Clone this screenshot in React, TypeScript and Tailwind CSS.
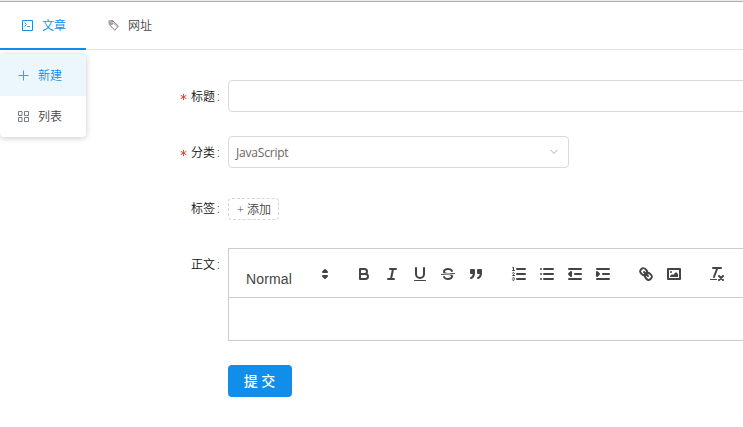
import type { ReactNode } from 'react';

function Tool({ children }: { children: ReactNode }) {
  return (
    <button className="flex h-6 w-7 items-center justify-center">
      <svg viewBox="0 0 18 18" className="h-[18px] w-[18px]" fill="none" stroke="#444" strokeWidth="2" strokeLinecap="round" strokeLinejoin="round">
        {children}
      </svg>
    </button>
  );
}

function Label({ text, required }: { text: string; required?: boolean }) {
  return (
    <div className="flex h-8 w-[228px] shrink-0 items-center justify-end pr-[6px] pt-[2px] text-[#111]">
      {required && (
        <svg viewBox="0 0 8 8" className="mr-[4px] h-[8px] w-[7px]" stroke="#e8402f" strokeWidth="1.1">
          <path d="M4 .5v7M.8 2l6.4 4M7.2 2L.8 6" />
        </svg>
      )}
      <span>{text}</span>
      <span className="ml-[2px] w-[5px] text-[12px]">:</span>
    </div>
  );
}

export default function App() {
  return (
    <div className="h-[427px] w-[743px] overflow-hidden bg-white font-['Open_Sans','Noto_Sans_CJK_SC',sans-serif] text-[12px] font-[350] leading-[18px] text-[#444]">
      <div className="h-[2px] border-b border-[#adadad] bg-[#ececec]" />
      <nav className="relative flex h-12 border-b border-[#e4e4e4]">
        <div className="-mb-px flex w-[86px] items-center border-b-2 border-[#108ee9] pl-[22px] pt-[2px] text-[#108ee9]">
          <svg viewBox="0 0 11 11" className="-mt-px h-[11px] w-[11px]" fill="none" stroke="currentColor">
            <path d="M.5.5h10v10H.5z" />
            <path d="M2.5 2.5l2 2-2 2M5 6.5h3" strokeWidth=".8" />
          </svg>
          <span className="ml-[9px]">文章</span>
        </div>
        <div className="flex items-center pb-px pl-[22px] pt-[2px]">
          <svg viewBox="0 0 12 12" className="-mt-px h-[11px] w-[11px]" fill="none" stroke="#75675f" strokeWidth=".9">
            <path d="M1 1l4-.3 6.2 5.8L7.4 11.2 1.5 5z" />
            <path d="M5 .7L2.8 2.2l-.5 3.6M5 .7l-.2 1.6 5.6 5.2" strokeWidth=".7" />
            <circle cx="4.2" cy="4" r=".9" />
          </svg>
          <span className="ml-[9px]">网址</span>
        </div>
        <div className="absolute left-0 top-[52px] h-[83px] w-[86px] overflow-visible rounded-[4px] bg-white shadow-[0_1px_6px_rgba(0,0,0,0.22)]">
          <div className="flex h-[42px] items-center rounded-t-[4px] bg-[#ebf6fd] pl-[18px] pt-[2px] text-[#108ee9]">
            <svg viewBox="0 0 11 11" className="-mt-[2px] h-[11px] w-[11px]" stroke="#5f8fd6">
              <path d="M5.5.5v10M.5 5.5h10" />
            </svg>
            <span className="ml-[9px]">新建</span>
          </div>
          <div className="flex h-[41px] items-center pl-[18px]">
            <svg viewBox="0 0 11 11" className="-mt-px h-[11px] w-[11px]" fill="none" stroke="#65707a" strokeWidth=".9">
              <path d="M.5.5h3.5v4H.5zM6.5.5h4v4h-4zM.5 6.5h3.5v4H.5zM6.5 6.5h4v4h-4z" />
            </svg>
            <span className="ml-[9px]">列表</span>
          </div>
        </div>
      </nav>

      <form className="flex w-[760px] flex-col pt-[30px]">
        <div className="flex h-14">
          <Label text="标题" required />
          <div className="h-8 flex-1 rounded-[4px] border border-[#d9d9d9]" />
        </div>
        <div className="flex h-14">
          <Label text="分类" required />
          <div className="flex h-8 w-[341px] items-center justify-between rounded-[4px] border border-[#d9d9d9] pl-[7px] pr-[10px]">
            <span className="pt-[2px] font-normal tracking-[-0.2px] text-[#6b6460]">JavaScript</span>
            <svg viewBox="0 0 8 6" className="h-[6px] w-[8px]" fill="none" stroke="#b0b0b0">
              <path d="M.8 1L4 4.5 7.2 1" />
            </svg>
          </div>
        </div>
        <div className="flex h-14">
          <Label text="标签" />
          <div className="mt-[6px] flex h-[22px] w-[51px] items-center justify-center rounded-[4px] border border-dashed border-[#d5d5d5] pl-px pt-[2px]">
            + 添加
          </div>
        </div>
        <div className="flex h-[93px]">
          <Label text="正文" />
          <div className="flex-1 border border-[#ccc]">
            <div className="flex h-[49px] items-center gap-[15px] border-b border-[#ccc] pl-2 pt-px font-['Liberation_Sans',Arial,sans-serif] font-normal text-[#444]">
              <div className="flex w-[98px] items-center justify-between pl-[9px]">
                <span className="mt-[10px] text-[14px] leading-6 tracking-[0.15px]">Normal</span>
                <svg viewBox="0 0 18 18" className="mr-[1px] h-[18px] w-[18px]" fill="#444" stroke="#444" strokeWidth="2" strokeLinecap="round" strokeLinejoin="round">
                  <polygon points="7 11 9 13 11 11" />
                  <polygon points="7 7 9 5 11 7" />
                </svg>
              </div>
              <div className="flex">
                <Tool>
                  <path d="M5 4h4.5a2.5 2.5 0 0 1 0 5H5z" />
                  <path d="M5 9h5.5a2.5 2.5 0 0 1 0 5H5z" />
                </Tool>
                <Tool>
                  <path d="M7 4h6M5 14h6M8 14l2-10" />
                </Tool>
                <Tool>
                  <path d="M5 3v6a4 4 0 0 0 8 0V3" />
                  <rect x="3" y="15" width="12" height="1" rx=".5" fill="#444" stroke="none" />
                </Tool>
                <Tool>
                  <path d="M15.5 8.5l-13 1" strokeWidth="1" />
                  <g fill="#444" stroke="none">
                    <path d="M9.007,8C6.542,7.791,6,7.519,6,6.5,6,5.792,7.283,5,9,5c1.571,0,2.765.679,2.969,1.309a1,1,0,0,0,1.9-.617C13.356,4.106,11.354,3,9,3,6.2,3,4,4.538,4,6.5a3.2,3.2,0,0,0,.5,1.843Z" />
                    <path d="M8.984,10C11.457,10.208,12,10.479,12,11.5c0,.708-1.283,1.5-3,1.5-1.571,0-2.765-.679-2.969-1.309a1,1,0,1,0-1.9.617C4.644,13.894,6.646,15,9,15c2.8,0,5-1.538,5-3.5a3.2,3.2,0,0,0-.5-1.843Z" />
                  </g>
                </Tool>
                <Tool>
                  <g fill="#444">
                    <rect x="4" y="5" width="3" height="3" />
                    <rect x="11" y="5" width="3" height="3" />
                    <path d="M7 8c0 4.031-3 5-3 5M14 8c0 4.031-3 5-3 5" />
                  </g>
                </Tool>
              </div>
              <div className="flex">
                <Tool>
                  <path d="M7 4h8M7 9h8M7 14h8" />
                  <g strokeWidth="1">
                    <path d="M2.5 5.5h2" />
                    <path d="M4.5 10.5h-2c0-.234 1.85-1.076 1.85-2.234A.959.959 0 0 0 2.5 8.156" />
                    <path d="M2.5 14.846a.959.959 0 0 0 1.85-.109A.7.7 0 0 0 3.75 14a.688.688 0 0 0 .6-.736.959.959 0 0 0-1.85-.109" />
                  </g>
                  <path fill="#444" stroke="none" d="M3.5,6A.5.5,0,0,1,3,5.5V3.085l-.276.138A.5.5,0,0,1,2.053,3c-.124-.247-.023-.324.224-.447l1-.5A.5.5,0,0,1,4,2.5v3A.5.5,0,0,1,3.5,6Z" />
                </Tool>
                <Tool>
                  <path d="M6 4h9M6 9h9M6 14h9M3 4h0M3 9h0M3 14h0" />
                </Tool>
                <Tool>
                  <path d="M3 4h12M9 9h6M3 14h12" />
                  <path d="M5 7v4L3 9z" fill="#444" />
                </Tool>
                <Tool>
                  <path d="M3 4h12M9 9h6M3 14h12" />
                  <path d="M3 7v4l2-2z" fill="#444" />
                </Tool>
              </div>
              <div className="flex">
                <Tool>
                  <path d="M7 7l4 4" />
                  <path d="M8.9,4.577a3.476,3.476,0,0,1,.36,4.679A3.476,3.476,0,0,1,4.577,8.9C3.185,7.5,2.035,6.4,4.217,4.217S7.5,3.185,8.9,4.577Z" />
                  <path d="M13.423,9.1a3.476,3.476,0,0,0-4.679-.36,3.476,3.476,0,0,0,.36,4.679c1.392,1.392,2.5,2.542,4.679.36S14.815,10.5,13.423,9.1Z" />
                </Tool>
                <Tool>
                  <rect x="3" y="4" width="12" height="10" />
                  <g fill="#444" stroke="none">
                    <circle cx="6" cy="7" r="1" />
                    <polygon points="5 12 5 11 7 9 8 10 11 7 13 9 13 12" />
                  </g>
                </Tool>
              </div>
              <div className="flex">
                <Tool>
                  <path d="M5 3h8M6 12l3.35-9M11 11l4 4M15 11l-4 4" />
                  <rect x="2" y="14" width="7" height="1" rx=".5" fill="#444" stroke="none" />
                </Tool>
              </div>
            </div>
          </div>
        </div>
        <button type="button" className="ml-[228px] mt-6 h-8 w-16 rounded-[4px] bg-[#108ee9] pr-px text-[14px] font-medium text-white">
          提 交
        </button>
      </form>
    </div>
  );
}
